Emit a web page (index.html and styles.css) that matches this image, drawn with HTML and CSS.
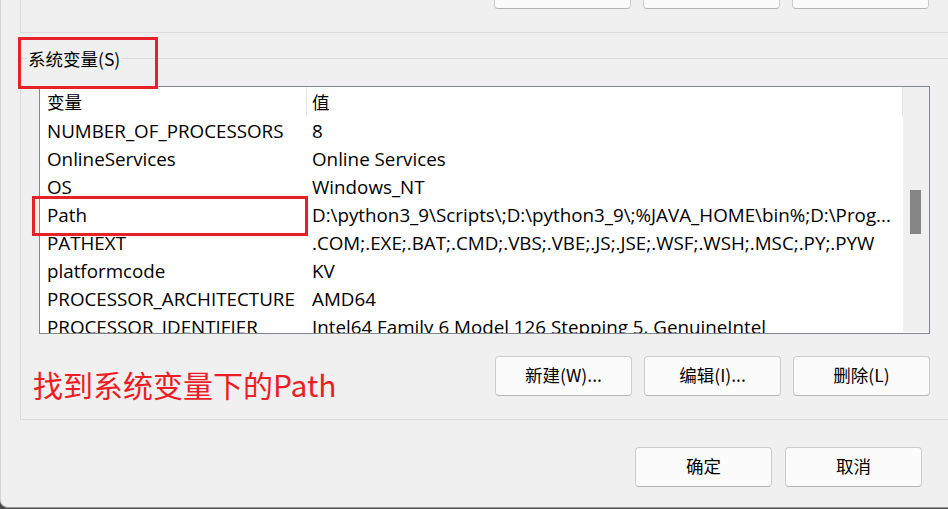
FILE: index.html
```html
<!DOCTYPE html>
<html>
<head>
<meta charset="utf-8">
<title>环境变量</title>
<link rel="stylesheet" href="styles.css">
</head>
<body>
<div class="window">

<!-- user variables group, scrolled off the top -->
<div class="groupTop">
	<span class="btnStub"></span>
	<span class="btnStub"></span>
	<span class="btnStub"></span>
</div>

<fieldset class="group">
<legend>系统变量(S)</legend>
<div class="content">
	<div class="list">
		<div class="listBody">
			<div class="row head"><div class="c1">变量</div><div class="c2">值</div></div>
			<div class="row"><div class="c1">NUMBER_OF_PROCESSORS</div><div class="c2">8</div></div>
			<div class="row"><div class="c1">OnlineServices</div><div class="c2">Online Services</div></div>
			<div class="row"><div class="c1">OS</div><div class="c2">Windows_NT</div></div>
			<div class="row"><div class="c1">Path</div><div class="c2">D:\python3_9\Scripts\;D:\python3_9\;%JAVA_HOME\bin%;D:\Prog...</div></div>
			<div class="row"><div class="c1">PATHEXT</div><div class="c2">.COM;.EXE;.BAT;.CMD;.VBS;.VBE;.JS;.JSE;.WSF;.WSH;.MSC;.PY;.PYW</div></div>
			<div class="row"><div class="c1">platformcode</div><div class="c2">KV</div></div>
			<div class="row"><div class="c1">PROCESSOR_ARCHITECTURE</div><div class="c2">AMD64</div></div>
			<div class="row"><div class="c1">PROCESSOR_IDENTIFIER</div><div class="c2">Intel64 Family 6 Model 126 Stepping 5, GenuineIntel</div></div>
		</div>
		<div class="scrollbar"><div class="thumb"></div></div>
	</div>
	<div class="actions">
		<div class="note">找到系统变量下的Path</div>
		<div class="btns">
			<button class="btn">新建(W)...</button>
			<button class="btn">编辑(I)...</button>
			<button class="btn">删除(L)</button>
		</div>
	</div>
</div>
</fieldset>

<div class="footer">
	<button class="btn">确定</button>
	<button class="btn">取消</button>
</div>

<!-- red marks drawn over the screenshot -->
<div class="mark markGroup"></div>
<div class="mark markPath"></div>

</div>
</body>
</html>
```

FILE: styles.css
```css
html, body {
	margin:0;
	padding:0;
}

body {
	width:948px;
	height:509px;
	overflow:hidden;
	background-color:#4a4a4a;
	font-family:"Open Sans", "Noto Sans CJK SC", sans-serif;
	color:#000;
}

.window {
	position:relative;
	box-sizing:border-box;
	width:948px;
	height:508px;
	overflow:hidden;
	background-color:#f0f0f0;
	border-left:1px solid #d4d4d4;
	border-bottom:1px solid #9c9c9c;
	border-bottom-left-radius:8px;
}

.groupTop {
	display:flex;
	justify-content:flex-end;
	align-items:flex-start;
	gap:12px;
	height:32px;
	margin-left:19px;
	padding-right:19px;
	border-left:1px solid #dcdcdc;
	border-bottom:1px solid #dcdcdc;
}

.btnStub {
	box-sizing:border-box;
	width:137px;
	height:9px;
	background-color:#fbfbfb;
	border:1px solid #cccccc;
	border-top:0;
	border-bottom-color:#b4b4b4;
	border-radius:0 0 4px 4px;
}

.group {
	margin:15px -30px 0 19px;
	padding:17px 0 0 6px;
	border:1px solid #dcdcdc;
	min-inline-size:0;
}

.group legend {
	padding:0 1px;
	font-family:"Noto Sans CJK SC", sans-serif;
	font-size:17.5px;
	line-height:21px;
	color:#000;
}

.content {
	width:903px;
}

.list {
	display:flex;
	box-sizing:border-box;
	width:891px;
	height:248px;
	margin-left:12px;
	border:1px solid #828790;
	background-color:#fff;
	overflow:hidden;
}

.listBody {
	width:863px;
	overflow:hidden;
}

.row {
	display:grid;
	grid-template-columns:267px 596px;
	height:28px;
	line-height:28px;
	font-size:18.8px;
	white-space:nowrap;
}

.row .c1 {
	padding-left:7px;
	overflow:hidden;
}

.row .c2 {
	padding-left:5px;
	overflow:hidden;
}

.row.head {
	height:30px;
	line-height:30px;
	font-family:"Noto Sans CJK SC", sans-serif;
	font-size:17.5px;
}

.row.head .c1,
.row.head .c2 {
	border-right:1px solid #e5e5e5;
}

.scrollbar {
	width:26px;
	height:245px;
	background-color:#f0f0f0;
}

.thumb {
	width:11px;
	height:44px;
	margin:103px 0 0 7px;
	background-color:#858585;
}

.actions {
	display:flex;
	justify-content:space-between;
	align-items:flex-start;
	height:63px;
	margin-top:22px;
}

.note {
	margin:10px 0 0 6px;
	font-family:"Noto Sans CJK SC", sans-serif;
	font-size:30px;
	line-height:36px;
	color:#ee1c25;
}

.btns {
	display:flex;
	gap:12px;
}

.btn {
	box-sizing:border-box;
	width:137px;
	height:40px;
	padding:0 0 3px 0;
	background-color:#fbfbfb;
	border:1px solid #cccccc;
	border-bottom-color:#b4b4b4;
	border-radius:4px;
	font-family:"Noto Sans CJK SC", sans-serif;
	font-size:17.5px;
	color:#000;
}

.footer {
	display:flex;
	justify-content:flex-end;
	gap:13px;
	padding:27px 26px 0 0;
}

.mark {
	position:absolute;
	box-sizing:border-box;
	border:3px solid #e8202a;
}

.markGroup {
	left:17px;
	top:37px;
	width:140px;
	height:52px;
}

.markPath {
	left:31px;
	top:196px;
	width:276px;
	height:40px;
}
```
